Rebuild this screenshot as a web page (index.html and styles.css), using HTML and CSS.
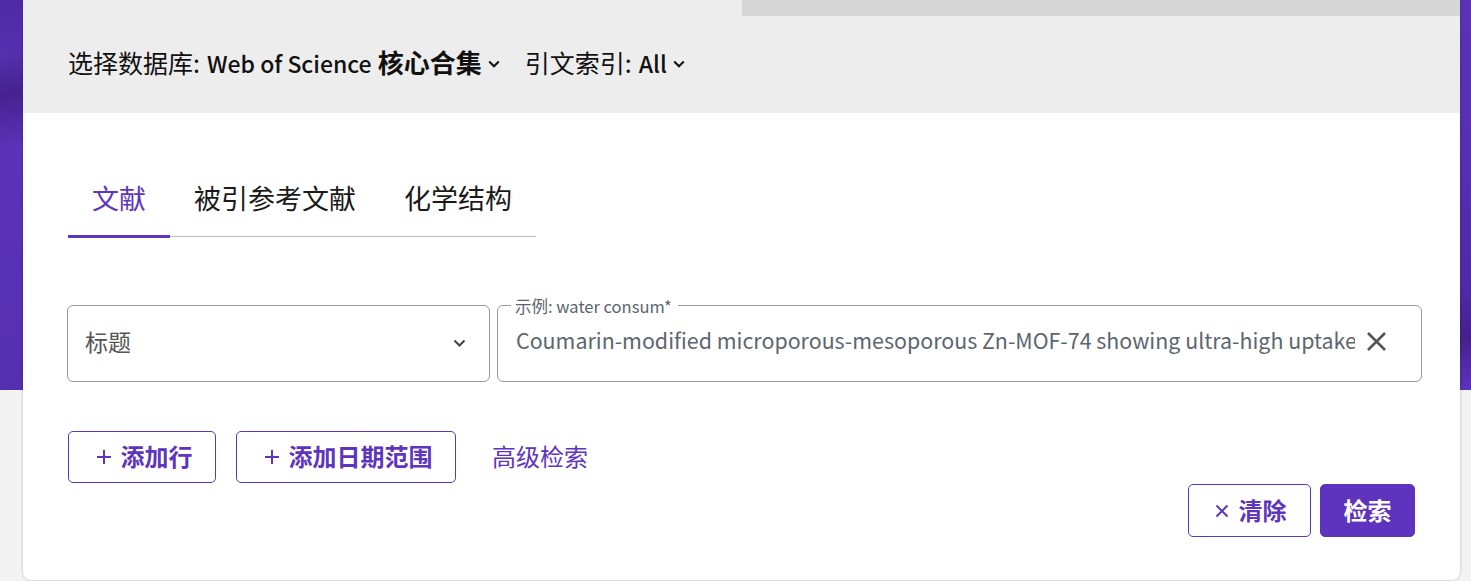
FILE: index.html
```html
<!DOCTYPE html>
<html lang="zh-CN">
<head>
<meta charset="utf-8">
<title>Web of Science 检索</title>
<link rel="stylesheet" href="styles.css">
</head>
<body>
<div class="page">
  <main class="card">
    <header class="db-bar">
      <div class="db-strip"></div>
      <div class="db-row">
        <span class="db-item">选择数据库:<span class="db-val">Web of Science </span><span class="db-cjk">核心合集</span>
          <svg class="chev" width="12" height="8" viewBox="0 0 12 8"><path d="M1.2 1.5l4.8 4.8 4.8-4.8" fill="none" stroke="#111" stroke-width="2"/></svg>
        </span>
        <span class="db-item">引文索引:<span class="db-val">All</span>
          <svg class="chev" width="12" height="8" viewBox="0 0 12 8"><path d="M1.2 1.5l4.8 4.8 4.8-4.8" fill="none" stroke="#111" stroke-width="2"/></svg>
        </span>
      </div>
    </header>

    <section class="search">
      <nav class="tabs">
        <span class="tab active">文献</span>
        <span class="tab">被引参考文献</span>
        <span class="tab">化学结构</span>
      </nav>

      <div class="query-row">
        <div class="field-select">
          <span class="field-label">标题</span>
          <svg width="13" height="8" viewBox="0 0 13 8"><path d="M1.5 1.5l5 5 5-5" fill="none" stroke="#444" stroke-width="2"/></svg>
        </div>
        <div class="query-input">
          <span class="legend">示例: water consum*</span>
          <span class="value">Coumarin-modified microporous-mesoporous Zn-MOF-74 showing ultra-high uptake of CO2</span>
          <svg class="clear-x" width="21" height="21" viewBox="0 0 21 21"><path d="M2 2l17 17M19 2L2 19" fill="none" stroke="#555" stroke-width="2.6"/></svg>
        </div>
      </div>

      <div class="actions">
        <button class="btn outline add-row"><svg width="14" height="14" viewBox="0 0 14 14"><path d="M7 0v14M0 7h14" stroke="#5e35be" stroke-width="2"/></svg>添加行</button>
        <button class="btn outline add-date"><svg width="14" height="14" viewBox="0 0 14 14"><path d="M7 0v14M0 7h14" stroke="#5e35be" stroke-width="2"/></svg>添加日期范围</button>
        <a class="adv-link">高级检索</a>
      </div>

      <div class="submit-row">
        <button class="btn outline clear"><svg width="14" height="14" viewBox="0 0 14 14"><path d="M1.5 1.5l11 11M12.5 1.5l-11 11" stroke="#5e35be" stroke-width="2"/></svg>清除</button>
        <button class="btn solid">检索</button>
      </div>
    </section>
  </main>
</div>
</body>
</html>
```

FILE: styles.css
```css
* { box-sizing: border-box; }

html, body { margin: 0; padding: 0; }

body {
  width: 1471px;
  height: 581px;
  overflow: hidden;
  font-family: "Noto Sans CJK SC", "Noto Sans", sans-serif;
  color: #111;
  background:
    linear-gradient(to bottom, transparent 390px, #f3f3f3 390px),
    linear-gradient(172deg, #4f2aa6 0%, #5430ae 7%, #45228f 12%, #5b33b9 19%, #5530b0 45%, #4e2aa5 63%, #44218c 69%, #5a32b8 75%, #5530b0 90%, #5833b4 100%);
}

.page {
  padding: 0 11px 0 23px;
}

.card {
  background: #fff;
  height: 580px;
  border-radius: 0 0 8px 8px;
  box-shadow: 0 0 3px rgba(0, 0, 0, 0.25);
  overflow: hidden;
}

/* database bar */
.db-bar {
  background: #ededed;
  height: 113px;
  display: flex;
  flex-direction: column;
}

.db-strip {
  height: 16px;
  margin-left: 719px;
  background: #d7d7d7;
}

.db-row {
  flex: 1;
  display: flex;
  align-items: center;
  gap: 25px;
  padding-left: 45px;
  padding-bottom: 4px;
  font-size: 25px;
  line-height: 32px;
}

.db-item {
  display: inline-flex;
  align-items: baseline;
  white-space: pre;
}

.db-val { font-weight: 500; font-size: 23px; margin-left: 7px; }
.db-cjk { font-weight: 700; font-size: 26px; margin-left: 1px; }

.chev { margin-left: 6px; align-self: center; margin-top: 2px; }

/* search */
.search {
  padding: 0 45px;
}

.tabs {
  display: flex;
  width: fit-content;
  margin-top: 65px;
  border-bottom: 1px solid #bdbdbd;
}

.tab {
  font-size: 27px;
  line-height: 40px;
  padding: 0 24px 17px;
  border-bottom: 3px solid transparent;
  margin-bottom: -2px;
  color: #1a1a1a;
}

.tab.active {
  color: #5e35be;
  border-bottom-color: #5e35be;
}

.query-row {
  display: flex;
  gap: 7px;
  margin-top: 68px;
  margin-right: -7px;
  height: 77px;
}

.field-select {
  width: 423px;
  margin-left: -1px;
  border: 1px solid #9a9a9a;
  border-radius: 6px;
  display: flex;
  align-items: center;
  justify-content: space-between;
  padding: 0 23px 0 17px;
}

.field-label {
  font-size: 23px;
  color: #555;
  margin-top: -5px;
}

.field-select svg { margin-top: -2px; }

.query-input {
  position: relative;
  flex: 1;
  min-width: 0;
  border: 1px solid #9a9a9a;
  border-radius: 6px;
  display: flex;
  align-items: center;
  gap: 11px;
  padding: 0 34px 0 18px;
}

.legend {
  position: absolute;
  top: -11px;
  left: 13px;
  padding: 0 6px 0 4px;
  background: #fff;
  font-size: 16.5px;
  line-height: 22px;
  color: #5a6570;
}

.value {
  flex: 1;
  min-width: 0;
  overflow: hidden;
  white-space: nowrap;
  font-size: 21.4px;
  color: #5c6670;
  margin-top: -8px;
}

.clear-x { flex: none; margin-top: -4px; }

.actions {
  display: flex;
  align-items: center;
  gap: 20px;
  margin-top: 49px;
}

.btn {
  font-family: inherit;
  font-size: 24px;
  font-weight: 700;
  height: 52px;
  border-radius: 5px;
  display: inline-flex;
  align-items: center;
  justify-content: center;
  gap: 10px;
  padding: 0 0 3px;
  cursor: pointer;
}

.btn svg { margin-top: 3px; }

.btn.outline {
  background: #fff;
  border: 1px solid #5e35be;
  color: #5e35be;
}

.add-row, .add-date { padding-left: 5px; }
.add-row { width: 148px; }
.add-date { width: 220px; }

.adv-link {
  margin-left: 16px;
  margin-top: -3px;
  font-size: 24px;
  color: #5e35be;
}

.submit-row {
  display: flex;
  justify-content: flex-end;
  gap: 9px;
  margin-top: 1px;
}

.submit-row .btn { height: 53px; }

.clear { width: 123px; padding-left: 2px; }

.btn.solid {
  width: 95px;
  background: #5e33bd;
  border: 1px solid #5e33bd;
  color: #fff;
}
```
